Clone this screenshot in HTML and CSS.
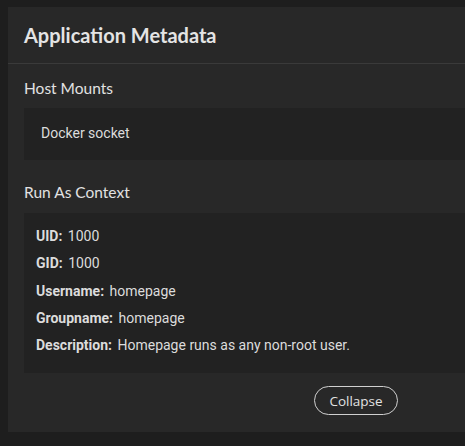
FILE: index.html
```html
<!DOCTYPE html>
<html>
<head>
<meta charset="utf-8">
<link rel="stylesheet" href="styles.css">
</head>
<body>
<div class="card">
  <div class="card-header">
    <h2 class="card-title">Application Metadata</h2>
  </div>
  <div class="card-body">
    <h3 class="section-title">Host Mounts</h3>
    <div class="box mounts">
      <div class="mount">Docker socket</div>
    </div>
    <h3 class="section-title second">Run As Context</h3>
    <div class="box context">
      <div class="row"><span class="label">UID:</span> 1000</div>
      <div class="row"><span class="label">GID:</span> 1000</div>
      <div class="row"><span class="label">Username:</span> homepage</div>
      <div class="row"><span class="label">Groupname:</span> homepage</div>
      <div class="row"><span class="label">Description:</span> Homepage runs as any non-root user.</div>
    </div>
    <div class="footer">
      <button class="collapse-btn">Collapse</button>
    </div>
  </div>
</div>
</body>
</html>
```
FILE: styles.css
```css
html, body {
  margin: 0;
  padding: 0;
  overflow: hidden;
  background: #1e1e1e;
}
body {
  padding: 7px 0 0 8px;
  width: 465px;
  height: 446px;
  box-sizing: border-box;
}
.card {
  width: 696px;
  background: #282828;
  color: #e2e2e2;
}
.card-header {
  height: 56px;
  display: flex;
  align-items: center;
  padding: 0 16px;
  border-bottom: 1px solid #3a3a3a;
}
.card-title {
  margin: 0;
  font-family: "Lato", sans-serif;
  font-weight: 700;
  font-size: 20px;
  color: #e4e4e4;
}
.card-body {
  padding: 14px 16px 17px;
}
.section-title {
  margin: 0 0 10px;
  font-family: "Lato", sans-serif;
  font-weight: 400;
  font-size: 15.5px;
  line-height: 20px;
  color: #e2e2e2;
}
.section-title.second {
  margin-top: 22px;
  margin-bottom: 11px;
}
.box {
  background: #222222;
  font-family: "Roboto", sans-serif;
  font-size: 14px;
  color: #dcdcdc;
}
.mounts {
  padding: 14px 17px 16px;
  line-height: 22px;
}
.context {
  padding: 10px 12px 14px;
  line-height: 27.25px;
}
.label {
  font-weight: 700;
  margin-right: 2px;
}
.footer {
  display: flex;
  justify-content: center;
  margin-top: 13px;
}
.collapse-btn {
  width: 84px;
  height: 29px;
  border: 1px solid #d0d0d0;
  border-radius: 15px;
  background: transparent;
  color: #e2e2e2;
  font-family: "Open Sans", sans-serif;
  font-size: 13.5px;
  padding: 0;
  cursor: pointer;
}
```
